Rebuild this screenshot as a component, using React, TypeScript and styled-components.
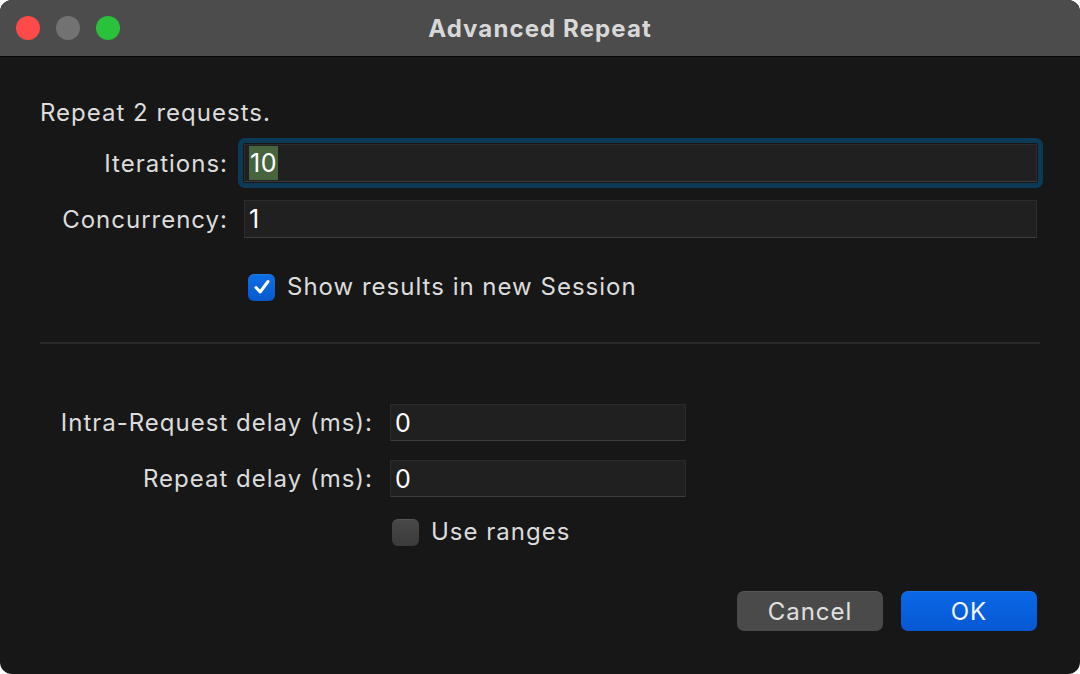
import React, { useState } from "react";
import styled, { createGlobalStyle } from "styled-components";

const GlobalStyle = createGlobalStyle`
  html, body {
    margin: 0;
    padding: 0;
    background: #ffffff;
  }
  * {
    box-sizing: border-box;
  }
`;

const Window = styled.div`
  width: 1080px;
  height: 674px;
  border-radius: 12px;
  overflow: hidden;
  background: #171717;
  display: flex;
  flex-direction: column;
  font-family: Inter, "Noto Sans", "Liberation Sans", sans-serif;
  letter-spacing: 1px;
  color: #dcdcdc;
`;

const TitleBar = styled.div`
  height: 57px;
  flex: none;
  background: #4c4c4c;
  border-bottom: 1px solid #050505;
  display: flex;
  align-items: center;
  position: relative;
  padding-left: 16px;
`;

const Lights = styled.div`
  display: flex;
  gap: 16px;
`;

const Light = styled.span<{ $color: string }>`
  width: 24px;
  height: 24px;
  border-radius: 50%;
  background: ${(p) => p.$color};
`;

const Title = styled.div`
  position: absolute;
  left: 0;
  right: 0;
  text-align: center;
  font-size: 24px;
  font-weight: 700;
  letter-spacing: 1.1px;
  color: #d8d8d8;
  pointer-events: none;
`;

const Body = styled.div`
  flex: 1;
  padding: 42px 43px 0 40px;
  display: flex;
  flex-direction: column;
`;

const Intro = styled.div`
  font-size: 24px;
  line-height: 28px;
  margin-bottom: 17px;
`;

const FormGrid = styled.div<{ $labelWidth: number; $gap: number; $fieldWidth?: number; $rowGap?: number }>`
  display: grid;
  grid-template-columns: ${(p) => p.$labelWidth}px ${(p) => (p.$fieldWidth ? `${p.$fieldWidth}px` : "1fr")};
  column-gap: ${(p) => p.$gap}px;
  row-gap: ${(p) => p.$rowGap ?? 18}px;
  align-items: center;
`;

const Label = styled.label`
  font-size: 24px;
  text-align: right;
  white-space: nowrap;
`;

const FieldWrap = styled.div<{ $focused?: boolean }>`
  position: relative;
  &::before {
    content: "";
    display: ${(p) => (p.$focused ? "block" : "none")};
    position: absolute;
    inset: -6px;
    border-radius: 7px;
    border: 5px solid #0b3a56;
  }
`;

const Field = styled.div<{ $h: number }>`
  height: ${(p) => p.$h}px;
  background: #202020;
  border: 1px solid #2c2c2c;
  border-bottom-color: #3c3c3c;
  display: flex;
  align-items: center;
  padding-left: 4px;
  font-size: 25px;
  letter-spacing: 0.5px;
  color: #ffffff;
  position: relative;
`;

const Selected = styled.span`
  background: #46653f;
  padding: 0 1px;
  line-height: 34px;
`;

const CheckRow = styled.label<{ $inset: number }>`
  display: flex;
  align-items: center;
  gap: 12px;
  height: 26px;
  margin-left: ${(p) => p.$inset}px;
  font-size: 24px;
  line-height: 26px;
  cursor: default;
`;

const Box = styled.span<{ $checked: boolean }>`
  width: 27px;
  height: 27px;
  flex: none;
  border-radius: 6px;
  display: flex;
  align-items: center;
  justify-content: center;
  background: ${(p) =>
    p.$checked ? "linear-gradient(#0f6fe6, #0759cc)" : "linear-gradient(#484848, #3b3b3b)"};
  box-shadow: inset 0 1px 0 rgba(255, 255, 255, 0.08);
`;

const Divider = styled.div`
  height: 2px;
  background: #2a2a2a;
  margin: 0 -3px 0 0;
`;

const Buttons = styled.div`
  display: flex;
  justify-content: flex-end;
  gap: 18px;
  margin-top: 46px;
`;

const Button = styled.button<{ $primary?: boolean }>`
  height: 40px;
  width: ${(p) => (p.$primary ? 136 : 146)}px;
  border: none;
  border-radius: 7px;
  font-family: inherit;
  font-size: 24px;
  letter-spacing: 1px;
  color: ${(p) => (p.$primary ? "#f2f6ff" : "#e0e0e0")};
  background: ${(p) => (p.$primary ? "linear-gradient(#0a68e6, #0758d2)" : "#4a4a4a")};
  box-shadow: inset 0 1px 0 rgba(255, 255, 255, 0.08);
`;

const Check = () => (
  <svg width="20" height="20" viewBox="0 0 20 20">
    <path
      d="M4 10.5 L8.2 15 L16 4.5"
      fill="none"
      stroke="#ffffff"
      strokeWidth="3"
      strokeLinecap="round"
      strokeLinejoin="round"
    />
  </svg>
);

const Spacer = styled.div<{ $h: number }>`
  height: ${(p) => p.$h}px;
  flex: none;
`;

const App: React.FC = () => {
  const [showInSession, setShowInSession] = useState(true);
  const [useRanges, setUseRanges] = useState(false);

  return (
    <>
      <GlobalStyle />
      <Window>
        <TitleBar>
          <Lights>
            <Light $color="#fe4a4b" />
            <Light $color="#727272" />
            <Light $color="#29c23a" />
          </Lights>
          <Title>Advanced Repeat</Title>
        </TitleBar>
        <Body>
          <Intro>Repeat 2 requests.</Intro>
          <FormGrid $labelWidth={188} $gap={16}>
            <Label>Iterations:</Label>
            <FieldWrap $focused>
              <Field $h={38}>
                <Selected>10</Selected>
              </Field>
            </FieldWrap>
            <Label>Concurrency:</Label>
            <FieldWrap>
              <Field $h={38}>1</Field>
            </FieldWrap>
          </FormGrid>
          <Spacer $h={36} />
          <CheckRow $inset={208} onClick={() => setShowInSession(!showInSession)}>
            <Box $checked={showInSession}>{showInSession && <Check />}</Box>
            Show results in new Session
          </CheckRow>
          <Spacer $h={42} />
          <Divider />
          <Spacer $h={60} />
          <FormGrid $labelWidth={333} $gap={17} $fieldWidth={296} $rowGap={19}>
            <Label>Intra-Request delay (ms):</Label>
            <Field $h={37}>0</Field>
            <Label>Repeat delay (ms):</Label>
            <Field $h={37}>0</Field>
          </FormGrid>
          <Spacer $h={22} />
          <CheckRow $inset={352} onClick={() => setUseRanges(!useRanges)}>
            <Box $checked={useRanges}>{useRanges && <Check />}</Box>
            Use ranges
          </CheckRow>
          <Buttons>
            <Button>Cancel</Button>
            <Button $primary>OK</Button>
          </Buttons>
        </Body>
      </Window>
    </>
  );
};

export default App;
